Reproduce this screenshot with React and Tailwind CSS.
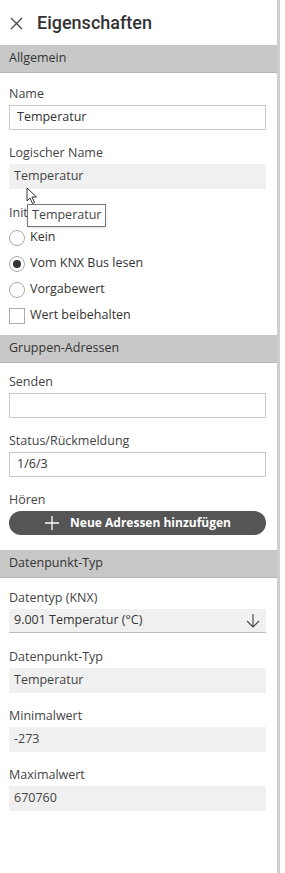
export default function App() {
    const body = { fontFamily: '"Open Sans", "DejaVu Sans", sans-serif' };
    return (
        <div className="flex w-[285px] h-[873px] bg-white text-[#333]" style={body}>
            <div className="w-[277px] flex flex-col">
                {/* header */}
                <div className="h-[45px] flex items-center pl-[10px] shrink-0">
                    <svg width="13" height="13" viewBox="0 0 13 13" className="mt-[1px]">
                        <path d="M1 1 L12 12 M12 1 L1 12" stroke="#444" strokeWidth="1.2" />
                    </svg>
                    <span className="ml-[14px] text-[18px] font-medium text-[#333]" style={{ fontFamily: 'Roboto, sans-serif' }}>
                        Eigenschaften
                    </span>
                </div>

                <Section title="Allgemein" />
                <div className="pl-[9px] pr-[11px] pt-[13px] pb-[11px] flex flex-col">
                    <Label>Name</Label>
                    <Input value="Temperatur" />
                    <Label className="mt-[15px]">Logischer Name</Label>
                    <div className="relative">
                        <ReadOnly value="Temperatur" />
                        {/* cursor */}
                        <svg width="12" height="19" viewBox="0 0 12 19" className="absolute left-[17px] top-[23px]">
                            <path d="M1 1 L1 14 L4 11 L6.5 16.5 L8.5 15.5 L6 10 L10.5 10 Z" fill="white" stroke="#333" strokeWidth="1" />
                        </svg>
                    </div>
                    <div className="relative mt-[16px]">
                        <Label>Initialwert</Label>
                        <div className="absolute left-[18px] top-[-1px] bg-white border border-[#767676] px-[4px] h-[23px] flex items-center text-[12.5px] text-[#444] shadow-sm">
                            Temperatur
                        </div>
                    </div>
                    <div className="flex flex-col gap-[9px] mt-[5px]">
                        <Radio label="Kein" />
                        <Radio label="Vom KNX Bus lesen" checked />
                        <Radio label="Vorgabewert" />
                        <div className="flex items-center h-[17px]">
                            <span className="w-[16px] h-[16px] border border-[#aaa] bg-white"></span>
                            <span className="ml-[5px] text-[12.5px]">Wert beibehalten</span>
                        </div>
                    </div>
                </div>

                <Section title="Gruppen-Adressen" />
                <div className="pl-[9px] pr-[11px] pt-[11px] pb-[15px] flex flex-col">
                    <Label>Senden</Label>
                    <Input value="" />
                    <Label className="mt-[15px]">Status/Rückmeldung</Label>
                    <Input value="1/6/3" />
                    <Label className="mt-[15px]">Hören</Label>
                    <button className="h-[24px] rounded-full bg-[#555] text-white text-[12px] font-bold flex items-center justify-center">
                        <svg width="16" height="16" viewBox="0 0 16 16" className="mr-[10px]">
                            <path d="M8 1 V15 M1 8 H15" stroke="white" strokeWidth="1.3" />
                        </svg>
                        Neue Adressen hinzufügen
                    </button>
                </div>

                <Section title="Datenpunkt-Typ" />
                <div className="pl-[9px] pr-[11px] pt-[12px] flex flex-col">
                    <Label>Datentyp (KNX)</Label>
                    <div className="h-[24px] bg-[#f0f0f0] border-b border-[#bbb] flex items-center justify-between pl-[5px] pr-[6px] text-[12.5px]">
                        <span>9.001 Temperatur (°C)</span>
                        <svg width="14" height="16" viewBox="0 0 14 16">
                            <path d="M7 1 V14 M1 8 L7 14 L13 8" stroke="#444" strokeWidth="1.1" fill="none" />
                        </svg>
                    </div>
                    <Label className="mt-[16px]">Datenpunkt-Typ</Label>
                    <ReadOnly value="Temperatur" />
                    <Label className="mt-[15px]">Minimalwert</Label>
                    <ReadOnly value="-273" />
                    <Label className="mt-[15px]">Maximalwert</Label>
                    <ReadOnly value="670760" />
                </div>
            </div>
            <div className="w-[3px] bg-[#cfcfcf]"></div>
            <div className="flex-1 bg-white"></div>
        </div>
    );
}

function Section({ title }) {
    return (
        <div className="h-[28px] bg-[#c8c8c8] border-b border-[#b5b5b5] flex items-center px-[9px] text-[12.5px] text-[#333] shrink-0">
            {title}
        </div>
    );
}

function Label({ children, className = "" }) {
    return <div className={"text-[12.5px] text-[#444] h-[15px] leading-[15px] mb-[4px] " + className}>{children}</div>;
}

function Input({ value }) {
    return (
        <div className="h-[25px] border border-[#c8c8c8] bg-white flex items-center px-[7px] text-[12.5px] text-[#333]">
            {value}
        </div>
    );
}

function ReadOnly({ value }) {
    return (
        <div className="h-[25px] bg-[#f0f0f0] flex items-center px-[5px] text-[12.5px] text-[#444]">
            {value}
        </div>
    );
}

function Radio({ label, checked }) {
    return (
        <div className="flex items-center h-[17px]">
            <span className="w-[16px] h-[16px] rounded-full border border-[#aaa] bg-white flex items-center justify-center">
                {checked && <span className="w-[8px] h-[8px] rounded-full bg-[#333]"></span>}
            </span>
            <span className="ml-[5px] text-[12.5px]">{label}</span>
        </div>
    );
}
